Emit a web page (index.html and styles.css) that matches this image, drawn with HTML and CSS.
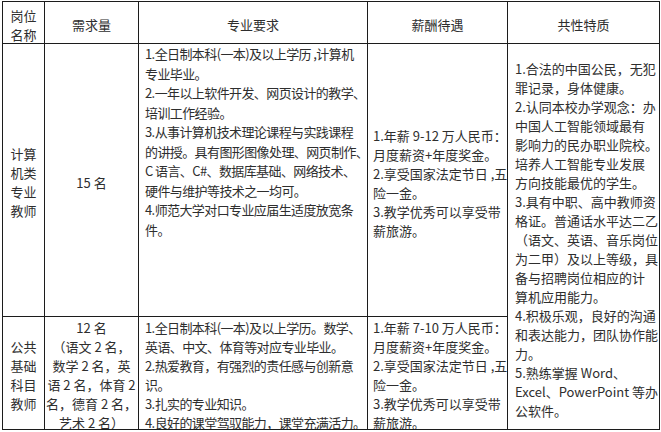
FILE: index.html
```html
<!DOCTYPE html>
<html lang="zh-CN">
<head>
<meta charset="utf-8">
<title>招聘岗位</title>
<link rel="stylesheet" href="styles.css">
</head>
<body>
<div class="sheet">
  <div class="cell head-two center"><div class="tx">岗位<br>名称</div></div>
  <div class="cell head center"><div class="tx">需求量</div></div>
  <div class="cell head center"><div class="tx">专业要求</div></div>
  <div class="cell head center"><div class="tx">薪酬待遇</div></div>
  <div class="cell head center"><div class="tx">共性特质</div></div>

  <div class="cell mid center r1name"><div class="tx">计算<br>机类<br>专业<br>教师</div></div>
  <div class="cell mid center r1num"><div class="tx">15 名</div></div>
  <div class="cell top c3 r1req"><div class="tx">1.全日制本科(一本)及以上学历 ,计算机<br>专业毕业。<br>2.一年以上软件开发、网页设计的教学、<br>培训工作经验。<br>3.从事计算机技术理论课程与实践课程<br>的讲授。具有图形图像处理、网页制作、<br>C 语言、C#、数据库基础、网络技术、<br>硬件与维护等技术之一均可。<br>4.师范大学对口专业应届生适度放宽条<br>件。</div></div>
  <div class="cell mid c4 r1pay"><div class="tx">1.年薪 9-12 万人民币：<br>月度薪资+年度奖金。<br>2.享受国家法定节日 ,五<br>险一金。<br>3.教学优秀可以享受带<br>薪旅游。</div></div>
  <div class="cell mid c5 common"><div class="tx">1.合法的中国公民，无犯<br>罪记录，身体健康。<br>2.认同本校办学观念：办<br>中国人工智能领域最有<br>影响力的民办职业院校。<br>培养人工智能专业发展<br>方向技能最优的学生。<br>3.具有中职、高中教师资<br>格证。普通话水平达二乙<br>（语文、英语、音乐岗位<br>为二甲）及以上等级，具<br>备与招聘岗位相应的计<br>算机应用能力。<br>4.积极乐观，良好的沟通<br>和表达能力，团队协作能<br>力。<br>5.熟练掌握 Word、<br>Excel、PowerPoint 等办<br>公软件。</div></div>

  <div class="cell top center r2name"><div class="tx">公共<br>基础<br>科目<br>教师</div></div>
  <div class="cell top center r2num"><div class="tx">12 名<br>（语文 2 名，<br>数学 2 名，英<br>语 2 名，体育 2<br>名，德育 2 名，<br>艺术 2 名）</div></div>
  <div class="cell top c3 r2"><div class="tx">1.全日制本科(一本)及以上学历。数学、<br>英语、中文、体育等对应专业毕业。<br>2.热爱教育，有强烈的责任感与创新意<br>识。<br>3.扎实的专业知识。<br>4.良好的课堂驾驭能力，课堂充满活力。</div></div>
  <div class="cell top c4 r2"><div class="tx">1.年薪 7-10 万人民币：<br>月度薪资+年度奖金。<br>2.享受国家法定节日 ,五<br>险一金。<br>3.教学优秀可以享受带<br>薪旅游。</div></div>
</div>
</body>
</html>
```
FILE: styles.css
```css
html, body {
  margin: 0;
  padding: 0;
  background: #ffffff;
}

.sheet {
  display: grid;
  grid-template-columns: 41px 93px 228px 139px 151px;
  grid-template-rows: 41px 272px 112px;
  gap: 1px;
  width: max-content;
  margin: 1px 0 0 2px;
  background: #1c1c1c;
  border: 1px solid #1c1c1c;
}

.cell {
  background: #ffffff;
  color: #2e2e2e;
  font-family: "Noto Sans CJK SC", "Noto Sans", sans-serif;
  font-size: 13px;
  line-height: 19px;
  white-space: nowrap;
  overflow: hidden;
  display: flex;
  flex-direction: column;
  box-sizing: border-box;
}

.head {
  justify-content: flex-start;
  padding-top: 13px;
}

.head-two {
  justify-content: flex-start;
  padding-top: 4px;
  line-height: 19px;
}

.center {
  align-items: center;
  text-align: center;
}

.mid {
  justify-content: center;
}

.top {
  justify-content: flex-start;
}

.c3 {
  padding-left: 6px;
  letter-spacing: -0.6px;
}

.c4 {
  padding-left: 5px;
}

.c5 {
  padding-left: 7px;
}

.r1name {
  padding-top: 4px;
}

.r1num {
  padding-top: 5px;
}

.r1req {
  line-height: 19.5px;
  padding-top: 0;
}

.r1pay {
  padding-top: 5px;
}

.common {
  grid-row: 2 / span 2;
  grid-column: 5;
  padding-top: 5px;
}

.r2name {
  padding-top: 20px;
}

.r2num {
  padding-top: 1px;
}

.r2 {
  padding-top: 1px;
}
```
